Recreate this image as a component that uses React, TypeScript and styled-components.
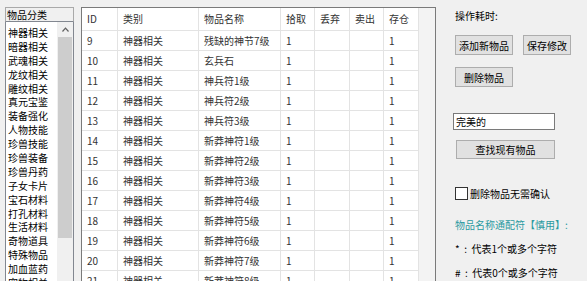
import styled, { createGlobalStyle } from "styled-components";

const GlobalStyle = createGlobalStyle`
  html, body {
    margin: 0;
    padding: 0;
    background: #f0f0f0;
    overflow: hidden;
  }
  body {
    font-family: "Noto Sans CJK SC", "Noto Sans", sans-serif;
    font-size: 10px;
    color: #000;
  }
`;

const Window = styled.div`
  display: flex;
  align-items: flex-start;
  width: 587px;
  height: 281px;
  padding: 7px 0 0 5px;
  box-sizing: border-box;
  overflow: hidden;
`;

/* ---------- left: category list ---------- */

const CategoryPanel = styled.div`
  width: 69px;
  flex-shrink: 0;
  display: flex;
  flex-direction: column;
`;

const CategoryTitle = styled.div`
  height: 13px;
  line-height: 13px;
  padding-left: 1px;
  border: 1px solid #a9a9a9;
  border-bottom-color: #828790;
`;

const CategoryList = styled.div`
  display: flex;
  height: 270px;
  background: #fff;
  border: 1px solid #828790;
  border-top: none;
`;

const ListItems = styled.div`
  flex: 1;
  padding: 4px 0 0 2px;
`;

const ListItem = styled.div`
  height: 13.9px;
  line-height: 13.9px;
  white-space: nowrap;
`;

const ScrollBar = styled.div`
  width: 16px;
  display: flex;
  flex-direction: column;
  background: #f0f0f0;
`;

const ScrollArrow = styled.div`
  height: 15px;
  display: flex;
  align-items: center;
  justify-content: center;
`;

const ScrollThumb = styled.div`
  height: 201px;
  margin: 0 1px;
  background: #cdcdcd;
`;

/* ---------- middle: item grid ---------- */

const GridFrame = styled.div`
  margin-left: 7px;
  width: 355px;
  height: 290px;
  flex-shrink: 0;
  box-sizing: border-box;
  border: 1px solid #7a7a7a;
  background: #f3f3f3;
  overflow: hidden;
`;

const columns = "36px 81px 82px 34px 35px 34px 35px";

const GridRow = styled.div<{ $header?: boolean }>`
  display: grid;
  grid-template-columns: ${columns};
  width: 337px;
  height: ${(p) => (p.$header ? "23px" : "20px")};
  background: #fff;
  color: #333;
`;

const Cell = styled.div`
  box-sizing: border-box;
  padding-left: 5px;
  border-right: 1px solid #e3e3e3;
  border-bottom: 1px solid #e3e3e3;
  line-height: 19px;
  white-space: nowrap;
  overflow: hidden;
  ${GridRow}[data-header] & {
    line-height: 22px;
  }
`;

/* ---------- right: actions ---------- */

const SidePanel = styled.div`
  margin-left: 19px;
  display: flex;
  flex-direction: column;
  align-items: flex-start;
`;

const Caption = styled.div<{ $gap: number; $color?: string }>`
  margin-top: ${(p) => p.$gap}px;
  line-height: 14px;
  white-space: pre;
  color: ${(p) => p.$color || "#000"};
`;

const ButtonRow = styled.div<{ $gap: number }>`
  display: flex;
  gap: 10px;
  margin-top: ${(p) => p.$gap}px;
`;

const Button = styled.button<{ $w: number; $h?: number }>`
  width: ${(p) => p.$w}px;
  height: ${(p) => p.$h || 20}px;
  padding: 0;
  background: #e1e1e1;
  border: 1px solid #adadad;
  font: inherit;
  color: #000;
`;

const SearchBox = styled.input`
  margin: 26px 0 0 -2px;
  width: 102px;
  height: 17px;
  box-sizing: border-box;
  padding: 0 0 0 2px;
  border: 1px solid #7a7a7a;
  background: #fff;
  font: inherit;
  color: #000;
  outline: none;
`;

const FindButton = styled(Button)`
  margin: 10px 0 0 1px;
`;

const CheckRow = styled.label`
  display: flex;
  align-items: center;
  gap: 2px;
  margin-top: 28px;
  line-height: 13px;
`;

const CheckBox = styled.span`
  width: 11px;
  height: 11px;
  border: 1px solid #333;
  background: #fff;
`;

const categories = [
  "神器相关", "暗器相关", "武魂相关", "龙纹相关", "雕纹相关", "真元宝鉴",
  "装备强化", "人物技能", "珍兽技能", "珍兽装备", "珍兽丹药", "子女卡片",
  "宝石材料", "打孔材料", "生活材料", "奇物道具", "特殊物品", "加血蓝药",
  "宠物相关",
];

const items = [
  [9, "残缺的神节7级"],
  [10, "玄兵石"],
  [11, "神兵符1级"],
  [12, "神兵符2级"],
  [13, "神兵符3级"],
  [14, "新莽神符1级"],
  [15, "新莽神符2级"],
  [16, "新莽神符3级"],
  [17, "新莽神符4级"],
  [18, "新莽神符5级"],
  [19, "新莽神符6级"],
  [20, "新莽神符7级"],
  [21, "新莽神符8级"],
] as const;

export default function App() {
  return (
    <>
      <GlobalStyle />
      <Window>
        <CategoryPanel>
          <CategoryTitle>物品分类</CategoryTitle>
          <CategoryList>
            <ListItems>
              {categories.map((c) => (
                <ListItem key={c}>{c}</ListItem>
              ))}
            </ListItems>
            <ScrollBar>
              <ScrollArrow>
                <svg width="7" height="5" viewBox="0 0 7 5">
                  <path d="M0.5 4.5 L3.5 1.2 L6.5 4.5" fill="none" stroke="#606060" strokeWidth="1.2" />
                </svg>
              </ScrollArrow>
              <ScrollThumb />
            </ScrollBar>
          </CategoryList>
        </CategoryPanel>

        <GridFrame>
          <GridRow $header data-header>
            {["ID", "类别", "物品名称", "拾取", "丢弃", "卖出", "存仓"].map((h) => (
              <Cell key={h}>{h}</Cell>
            ))}
          </GridRow>
          {items.map(([id, name]) => (
            <GridRow key={id}>
              <Cell>{id}</Cell>
              <Cell>神器相关</Cell>
              <Cell>{name}</Cell>
              <Cell>1</Cell>
              <Cell />
              <Cell />
              <Cell>1</Cell>
            </GridRow>
          ))}
        </GridFrame>

        <SidePanel>
          <Caption $gap={2}>操作耗时:</Caption>
          <ButtonRow $gap={12}>
            <Button $w={58}>添加新物品</Button>
            <Button $w={48}>保存修改</Button>
          </ButtonRow>
          <ButtonRow $gap={12}>
            <Button $w={58}>删除物品</Button>
          </ButtonRow>
          <SearchBox defaultValue="完美的" />
          <FindButton $w={99} $h={19}>查找现有物品</FindButton>
          <CheckRow>
            <CheckBox />
            删除物品无需确认
          </CheckRow>
          <Caption $gap={18} $color="#2b9aa0">物品名称通配符【慎用】:</Caption>
          <Caption $gap={10}>{"*  :  代表1个或多个字符"}</Caption>
          <Caption $gap={10}>{"#  :  代表0个或多个字符"}</Caption>
        </SidePanel>
      </Window>
    </>
  );
}
